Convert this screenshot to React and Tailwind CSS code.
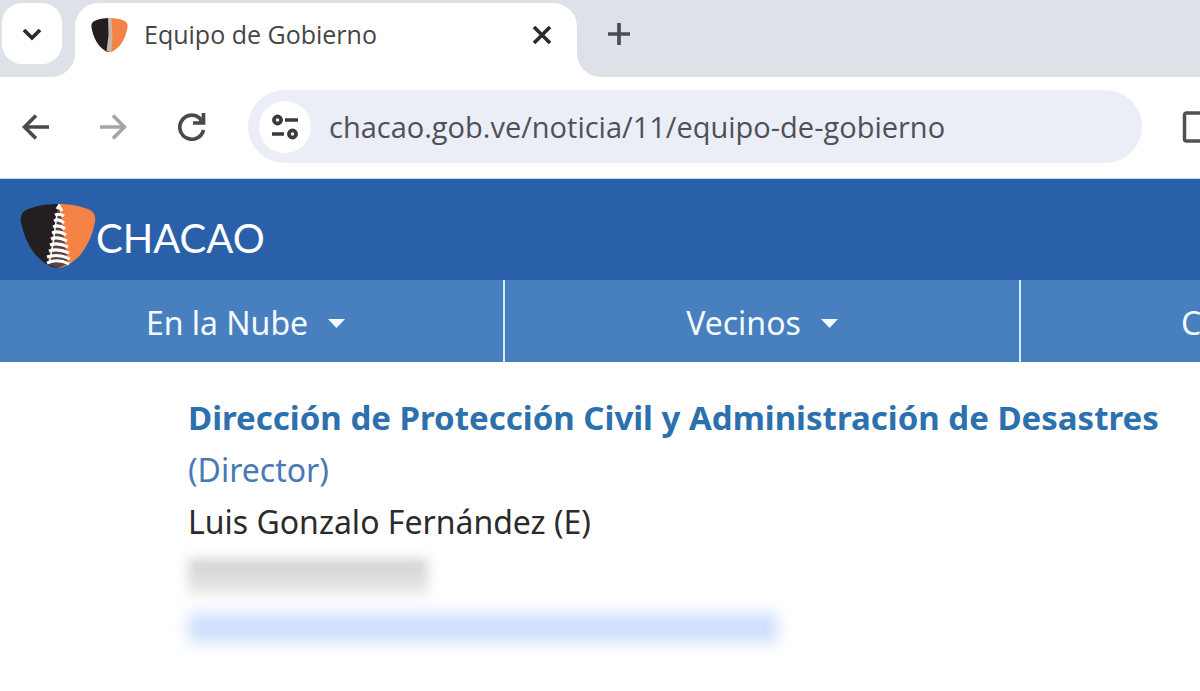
import React, { useState } from 'react';

const Shield = ({ className, detailed }) => (
  <svg className={className} viewBox="0 0 76 64" preserveAspectRatio="none" aria-hidden="true">
    <path d="M38 0C26 0 15 2 6 6C2 8 0 12 1 18C5 38 14 53 28 61Q33 64 38 64Z" fill="#231f20" />
    <path d="M38 0C50 0 61 2 70 6C74 8 76 12 75 18C71 38 62 53 48 61Q43 64 38 64Z" fill="#f58345" />
    {detailed ? (
      <>
        <path d="M38 1L41 12L43 28L48 60L38 64L27 60L32 40L35 20Z" fill="#5a4440" />
        <path
          d="M37 5L39 2L42 7M35 11Q39 9 44 12M34 17Q39 14 44 19M33 23Q39 20 45 25M32 29Q39 26 46 31M31 35Q38 32 47 37M30 41Q38 38 48 43M29 47Q38 44 49 49M27 53Q38 49 50 55M27 59Q38 54 49 60"
          fill="none"
          stroke="#fff"
          strokeWidth="3"
        />
        <path d="M37 10L33 40L29 60" fill="none" stroke="#fff" strokeWidth="1.500" />
      </>
    ) : (
      <path d="M35 0L42 0L44 32L42 62L38 64L32 61L36 32Z" fill="#c9b5ab" />
    )}
  </svg>
);

const Icon = ({ className, children }) => (
  <svg
    className={className}
    viewBox="0 0 28 28"
    fill="none"
    stroke="currentColor"
    strokeWidth="3.700"
    aria-hidden="true"
  >
    {children}
  </svg>
);

const Caret = () => (
  <svg className="h-[9px] w-[17px]" viewBox="0 0 17 9" aria-hidden="true">
    <path d="M0 0H17L8.500 9Z" fill="currentColor" />
  </svg>
);

const TabStrip = () => (
  <div className="flex h-[77px] bg-white font-['Open_Sans',sans-serif]">
    <div className="w-[75px] shrink-0 rounded-br-3xl bg-[#dde1e8] pt-[3px] pl-[2px]">
      <button
        type="button"
        aria-label="Buscar pestañas"
        className="flex h-[61px] w-[60px] items-center justify-center rounded-[20px] bg-white text-[#2b2b2b]"
      >
        <Icon className="h-7 w-7">
          <path d="M6 10L14 18L22 10" />
        </Icon>
      </button>
    </div>
    <div className="w-[502px] shrink-0 bg-[#dde1e8] pt-[3px]">
      <div className="flex h-full items-start rounded-t-3xl bg-white pr-5 pl-4">
        <div className="flex h-[64px] w-full items-center">
          <Shield className="h-[34px] w-[37px]" />
          <span className="ml-4 grow text-[25px] text-[#454545]">Equipo de Gobierno</span>
          <button type="button" aria-label="Cerrar pestaña" className="text-[#2b2b2b]">
            <Icon className="h-7 w-7">
              <path d="M5 6L21 22M21 6L5 22" />
            </Icon>
          </button>
        </div>
      </div>
    </div>
    <div className="grow rounded-bl-3xl bg-[#dde1e8] pt-5 pl-7">
      <button type="button" aria-label="Nueva pestaña" className="text-[#4a4d55]">
        <Icon className="h-7 w-7">
          <path d="M14 3V25M3 14H25" />
        </Icon>
      </button>
    </div>
  </div>
);

const Toolbar = () => {
  const [url, setUrl] = useState('chacao.gob.ve/noticia/11/equipo-de-gobierno');

  return (
    <div className="flex h-[102px] items-center border-b border-[#b9d9f2] bg-white pb-[2px] pl-[22px] font-['Open_Sans',sans-serif] text-[#4a4a4a]">
      <button type="button" aria-label="Atrás">
        <Icon className="h-7 w-7">
          <path d="M27 14H3M14 2.500L2.500 14L14 25.500" />
        </Icon>
      </button>
      <button type="button" aria-label="Adelante" className="ml-[49px] text-[#a5a5a5]">
        <Icon className="h-7 w-7">
          <path d="M1 14H25M14 2.500L25.500 14L14 25.500" />
        </Icon>
      </button>
      <button type="button" aria-label="Recargar" className="ml-[51px]">
        <Icon className="h-7 w-7">
          <path d="M25.500 17A12 12 0 1 1 21.500 5L25 9" />
          <path d="M25.500 0V10H15" />
          <path d="M25 4V10H19Z" fill="currentColor" stroke="none" />
        </Icon>
      </button>
      <div className="ml-[42px] flex h-[73px] grow items-center rounded-full bg-[#ebedf7] pl-[11px]">
        <button
          type="button"
          aria-label="Información del sitio"
          className="flex h-[52px] w-[52px] shrink-0 items-center justify-center rounded-full bg-white text-[#3a3a3d]"
        >
          <Icon className="h-7 w-7">
            <circle cx="6.500" cy="7" r="3.600" />
            <path d="M14 7H27M1 21H13" />
            <circle cx="21.500" cy="21" r="3.600" />
          </Icon>
        </button>
        <input
          type="text"
          aria-label="Dirección web"
          value={url}
          onChange={(e) => setUrl(e.target.value)}
          className="ml-[18px] h-12 min-w-0 grow bg-transparent text-[29px] text-[#505058] outline-none"
        />
      </div>
      <button type="button" aria-label="Panel lateral" className="ml-[40px] w-[18px] shrink-0 overflow-hidden">
        <svg className="h-[32px] w-[40px]" viewBox="0 0 40 32" aria-hidden="true">
          <rect x="2.500" y="2" width="34" height="28" rx="2" fill="none" stroke="#505050" strokeWidth="3.500" />
        </svg>
      </button>
    </div>
  );
};

const App = () => {
  return (
    <div className="min-h-screen overflow-hidden bg-white font-['Noto_Sans',sans-serif]">
      <TabStrip />
      <Toolbar />

      <header>
        <div className="flex h-[101px] items-center bg-[#2a60a9] pt-3 pl-5">
          <a href="#inicio" className="flex items-center text-white">
            <Shield detailed className="h-[64px] w-[76px]" />
            <span className="pt-1 font-[Lato,sans-serif] text-[40px] leading-none">CHACAO</span>
          </a>
        </div>
        <nav className="grid h-[82px] grid-cols-[505fr_516fr_179fr] bg-[#4880bf] text-[32px] text-[#f4fbff]">
          <button type="button" className="flex items-center justify-center gap-5 border-r-2 border-[#d3eefb] pt-1 pr-3">
            En la Nube
            <Caret />
          </button>
          <button type="button" className="flex items-center justify-center gap-5 border-r-2 border-[#d3eefb] pt-1">
            Vecinos
            <Caret />
          </button>
          <button type="button" className="overflow-hidden pt-1 pl-40 text-left">C</button>
        </nav>
      </header>

      <main className="pt-[30px] pl-[188px] text-[32px] leading-[52px] whitespace-nowrap text-[#2b2b2b]">
        <h1 className="text-[33px] font-bold text-[#2c70ae]">
          Dirección de Protección Civil y Administración de Desastres
        </h1>
        <p className="text-[#4a78b5]">(Director)</p>
        <p>Luis Gonzalo Fernández (E)</p>
        {/* datos de contacto ocultos */}
        <div className="mt-[11px] h-[36px] w-[240px] bg-linear-to-b from-[#cfcfcf] to-[#ebebeb] blur-[6px]" />
        <div className="mt-[18px] h-[30px] w-[590px] rounded-sm bg-[#cfdefd] blur-[8px]" />
      </main>
    </div>
  );
};

export default App;
